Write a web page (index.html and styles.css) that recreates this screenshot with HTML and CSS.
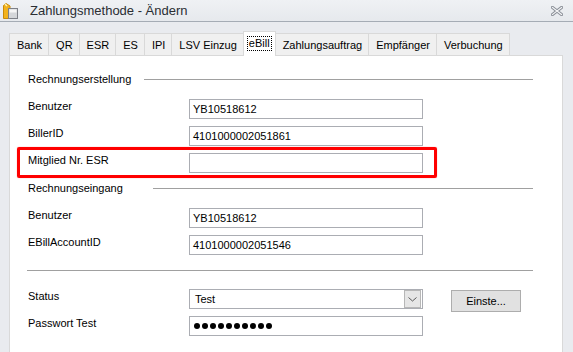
FILE: index.html
```html
<!DOCTYPE html>
<html lang="de">
<head>
    <meta charset="UTF-8">
    <title>Zahlungsmethode - Ändern</title>
    <link rel="stylesheet" href="styles.css">
</head>
<body>
    <div class="titlebar">
        <svg class="app-icon" viewBox="0 0 16 16">
            <path d="M1.5 2.5 L4 0.5 L8 3 L8 15.5 L1.5 15.5 Z" fill="#f2b21c" stroke="#c98a08"/>
            <path d="M3 1 L5 3" stroke="#fff3b0" stroke-width="1.5"/>
            <rect x="6.5" y="5.5" width="9" height="10" fill="#d4d6d9" stroke="#7d8087"/>
            <rect x="7.5" y="6.5" width="7" height="3" fill="#f5f5f5"/>
        </svg>
        <span class="title">Zahlungsmethode - Ändern</span>
        <svg class="close" viewBox="0 0 12 10">
            <path d="M1.5 1.5 L10.5 8.5 M10.5 1.5 L1.5 8.5" stroke="#8b9098" stroke-width="3.2" stroke-linecap="square"/>
            <path d="M1.5 1.5 L10.5 8.5 M10.5 1.5 L1.5 8.5" stroke="#f5f6f8" stroke-width="1.2" stroke-linecap="square"/>
        </svg>
    </div>
    <div class="frame">
        <div class="tabs">
            <div class="tab">Bank</div>
            <div class="tab">QR</div>
            <div class="tab">ESR</div>
            <div class="tab">ES</div>
            <div class="tab">IPI</div>
            <div class="tab">LSV Einzug</div>
            <div class="tab tab-active"><span class="focus">eBill</span></div>
            <div class="tab">Zahlungsauftrag</div>
            <div class="tab">Empfänger</div>
            <div class="tab">Verbuchung</div>
        </div>
        <div class="panel">
            <div class="group-head">
                <span class="group-title group-title-a">Rechnungserstellung</span>
                <span class="group-line"></span>
            </div>
            <div class="row row-first">
                <span class="label">Benutzer</span>
                <div class="field">YB10518612</div>
            </div>
            <div class="row">
                <span class="label">BillerID</span>
                <div class="field">4101000002051861</div>
            </div>
            <div class="highlight">
                <div class="row">
                    <span class="label">Mitglied Nr. ESR</span>
                    <div class="field"></div>
                </div>
            </div>
            <div class="group-head group-head-b">
                <span class="group-title group-title-b">Rechnungseingang</span>
                <span class="group-line"></span>
            </div>
            <div class="row row-first">
                <span class="label">Benutzer</span>
                <div class="field">YB10518612</div>
            </div>
            <div class="row">
                <span class="label">EBillAccountID</span>
                <div class="field">4101000002051546</div>
            </div>
            <div class="separator"></div>
            <div class="row row-status">
                <span class="label">Status</span>
                <div class="field combo">
                    <span>Test</span>
                    <span class="combo-arrow">
                        <svg viewBox="0 0 9 5" class="chevron"><path d="M0.5 0.5 L4.5 4 L8.5 0.5" fill="none" stroke="#5a5a5a"/></svg>
                    </span>
                </div>
                <div class="button">Einste...</div>
            </div>
            <div class="row">
                <span class="label">Passwort Test</span>
                <div class="field password">
                    <span class="dot"></span><span class="dot"></span><span class="dot"></span><span class="dot"></span><span class="dot"></span><span class="dot"></span><span class="dot"></span><span class="dot"></span><span class="dot"></span><span class="dot"></span>
                </div>
            </div>
        </div>
    </div>
</body>
</html>
```

FILE: styles.css
```css
body {
    margin: 0;
    width: 573px;
    height: 352px;
    overflow: hidden;
    background-color: #e9ebef;
    font-family: "Liberation Sans", Arial, sans-serif;
    font-size: 11px;
    color: #000;
}
.titlebar {
    height: 21px;
    border-bottom: 1px solid #a5acb5;
    display: flex;
    align-items: center;
    background: linear-gradient(#eff1f4, #e6e9ed);
}
.app-icon {
    width: 16px;
    height: 16px;
    margin-left: 2px;
}
.title {
    margin-left: 12px;
    font-size: 13px;
    color: #2a2e33;
}
.close {
    width: 12px;
    height: 10px;
    margin-left: auto;
    margin-right: 10px;
}
.frame {
    padding: 9px 10px 0 9px;
}
.tabs {
    display: flex;
    align-items: flex-end;
    height: 24px;
}
.tab {
    height: 22px;
    box-sizing: border-box;
    padding: 0 6px 0 7px;
    margin-left: -1px;
    border: 1px solid #d9d9d9;
    border-bottom: none;
    background-color: #f0f0f0;
    display: flex;
    align-items: center;
}
.tab:first-child {
    margin-left: 0;
}
.tab-active {
    height: 25px;
    margin-bottom: -1px;
    padding: 0 4px 2px;
    background-color: #fff;
    position: relative;
    z-index: 1;
}
.focus {
    outline: 1px dotted #000;
    padding: 0 1px;
    line-height: 13px;
}
.panel {
    width: 554px;
    height: 300px;
    box-sizing: border-box;
    background-color: #fff;
    border: 1px solid #d9d9d9;
    padding: 16px 29px 0 18px;
    display: flex;
    flex-direction: column;
}
.group-head {
    display: flex;
    align-items: center;
    height: 14px;
}
.group-head-b {
    margin-top: 8px;
}
.group-title {
    line-height: 14px;
    flex: none;
}
.group-title-a {
    width: 116px;
}
.group-title-b {
    width: 125px;
}
.group-line {
    flex: 1;
    height: 1px;
    margin-top: 1px;
    background-color: #a0a0a0;
}
.row {
    display: flex;
    align-items: flex-start;
    height: 20px;
    margin-top: 7px;
}
.row-first {
    margin-top: 13px;
}
.label {
    width: 161px;
    line-height: 14px;
    flex: none;
}
.field {
    width: 234px;
    height: 20px;
    box-sizing: border-box;
    border: 1px solid #abadb3;
    padding-left: 3px;
    line-height: 18px;
    flex: none;
}
.highlight {
    width: 420px;
    box-sizing: border-box;
    margin: 1px 0 -5px -11px;
    border: 3px solid #ff0000;
    border-radius: 2px;
    padding: 3px 0 2px 8px;
    box-shadow: 0 0 1px #ff6a6a;
}
.highlight .row {
    margin-top: 0;
}
.separator {
    height: 1px;
    margin: 15px 0 0 -1px;
    background-color: #a0a0a0;
}
.row-status {
    margin-top: 18px;
}
.combo {
    display: flex;
    justify-content: space-between;
    align-items: center;
    padding-left: 5px;
}
.combo-arrow {
    width: 17px;
    height: 18px;
    box-sizing: border-box;
    margin-right: 1px;
    border: 1px solid #b7b7b7;
    background-color: #e6e6e6;
    display: flex;
    align-items: center;
    justify-content: center;
}
.chevron {
    width: 9px;
    height: 5px;
}
.button {
    width: 70px;
    height: 22px;
    box-sizing: border-box;
    margin: 1px 0 0 28px;
    border: 1px solid #adadad;
    background-color: #e1e1e1;
    display: flex;
    align-items: center;
    justify-content: center;
}
.password {
    display: flex;
    align-items: center;
    padding-left: 4px;
}
.dot {
    width: 6px;
    height: 6px;
    margin-right: 2px;
    border-radius: 50%;
    background-color: #000;
}
```
